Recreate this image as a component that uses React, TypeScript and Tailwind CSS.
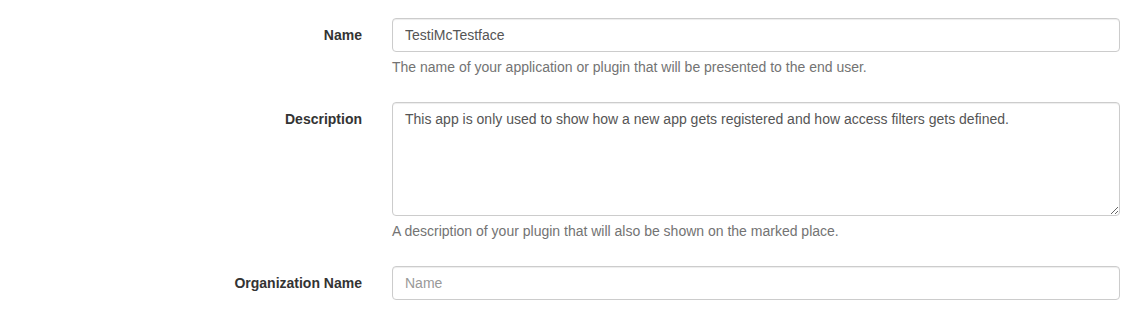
const Row = ({
  label,
  children,
  help,
}: {
  label: string;
  children: React.ReactNode;
  help?: string;
}) => {
  return (
    <div className="flex flex-row mb-[15px]">
      <label className="w-[362px] shrink-0 pt-[7px] text-right text-[14px] leading-[20px] font-bold text-[#333]">
        {label}
      </label>
      <div className="ml-[30px] w-[728px]">
        {children}
        {help && (
          <p className="mt-[5px] mb-[10px] text-[14px] leading-[20px] text-[#737373]">
            {help}
          </p>
        )}
      </div>
    </div>
  );
};

export default function App() {
  return (
    <div
      className="w-[1136px] h-[317px] bg-white pt-[18px] overflow-hidden"
      style={{ fontFamily: '"Liberation Sans", Arial, sans-serif' }}
    >
      <form className="flex flex-col">
        <Row
          label="Name"
          help="The name of your application or plugin that will be presented to the end user."
        >
          <input
            type="text"
            defaultValue="TestiMcTestface"
            className="block w-full h-[34px] px-3 py-[6px] text-[14px] text-[#555] border border-[#ccc] rounded-[4px] shadow-[inset_0_1px_1px_rgba(0,0,0,0.075)] outline-none"
          />
        </Row>
        <Row
          label="Description"
          help="A description of your plugin that will also be shown on the marked place."
        >
          <textarea
            defaultValue="This app is only used to show how a new app gets registered and how access filters gets defined."
            className="block w-full h-[114px] px-3 py-[6px] text-[14px] leading-[20px] text-[#555] border border-[#ccc] rounded-[4px] shadow-[inset_0_1px_1px_rgba(0,0,0,0.075)] outline-none"
          />
        </Row>
        <Row label="Organization Name">
          <input
            type="text"
            placeholder="Name"
            className="block w-full h-[34px] px-3 py-[6px] text-[14px] text-[#555] placeholder:text-[#999] border border-[#ccc] rounded-[4px] shadow-[inset_0_1px_1px_rgba(0,0,0,0.075)] outline-none"
          />
        </Row>
      </form>
    </div>
  );
}
